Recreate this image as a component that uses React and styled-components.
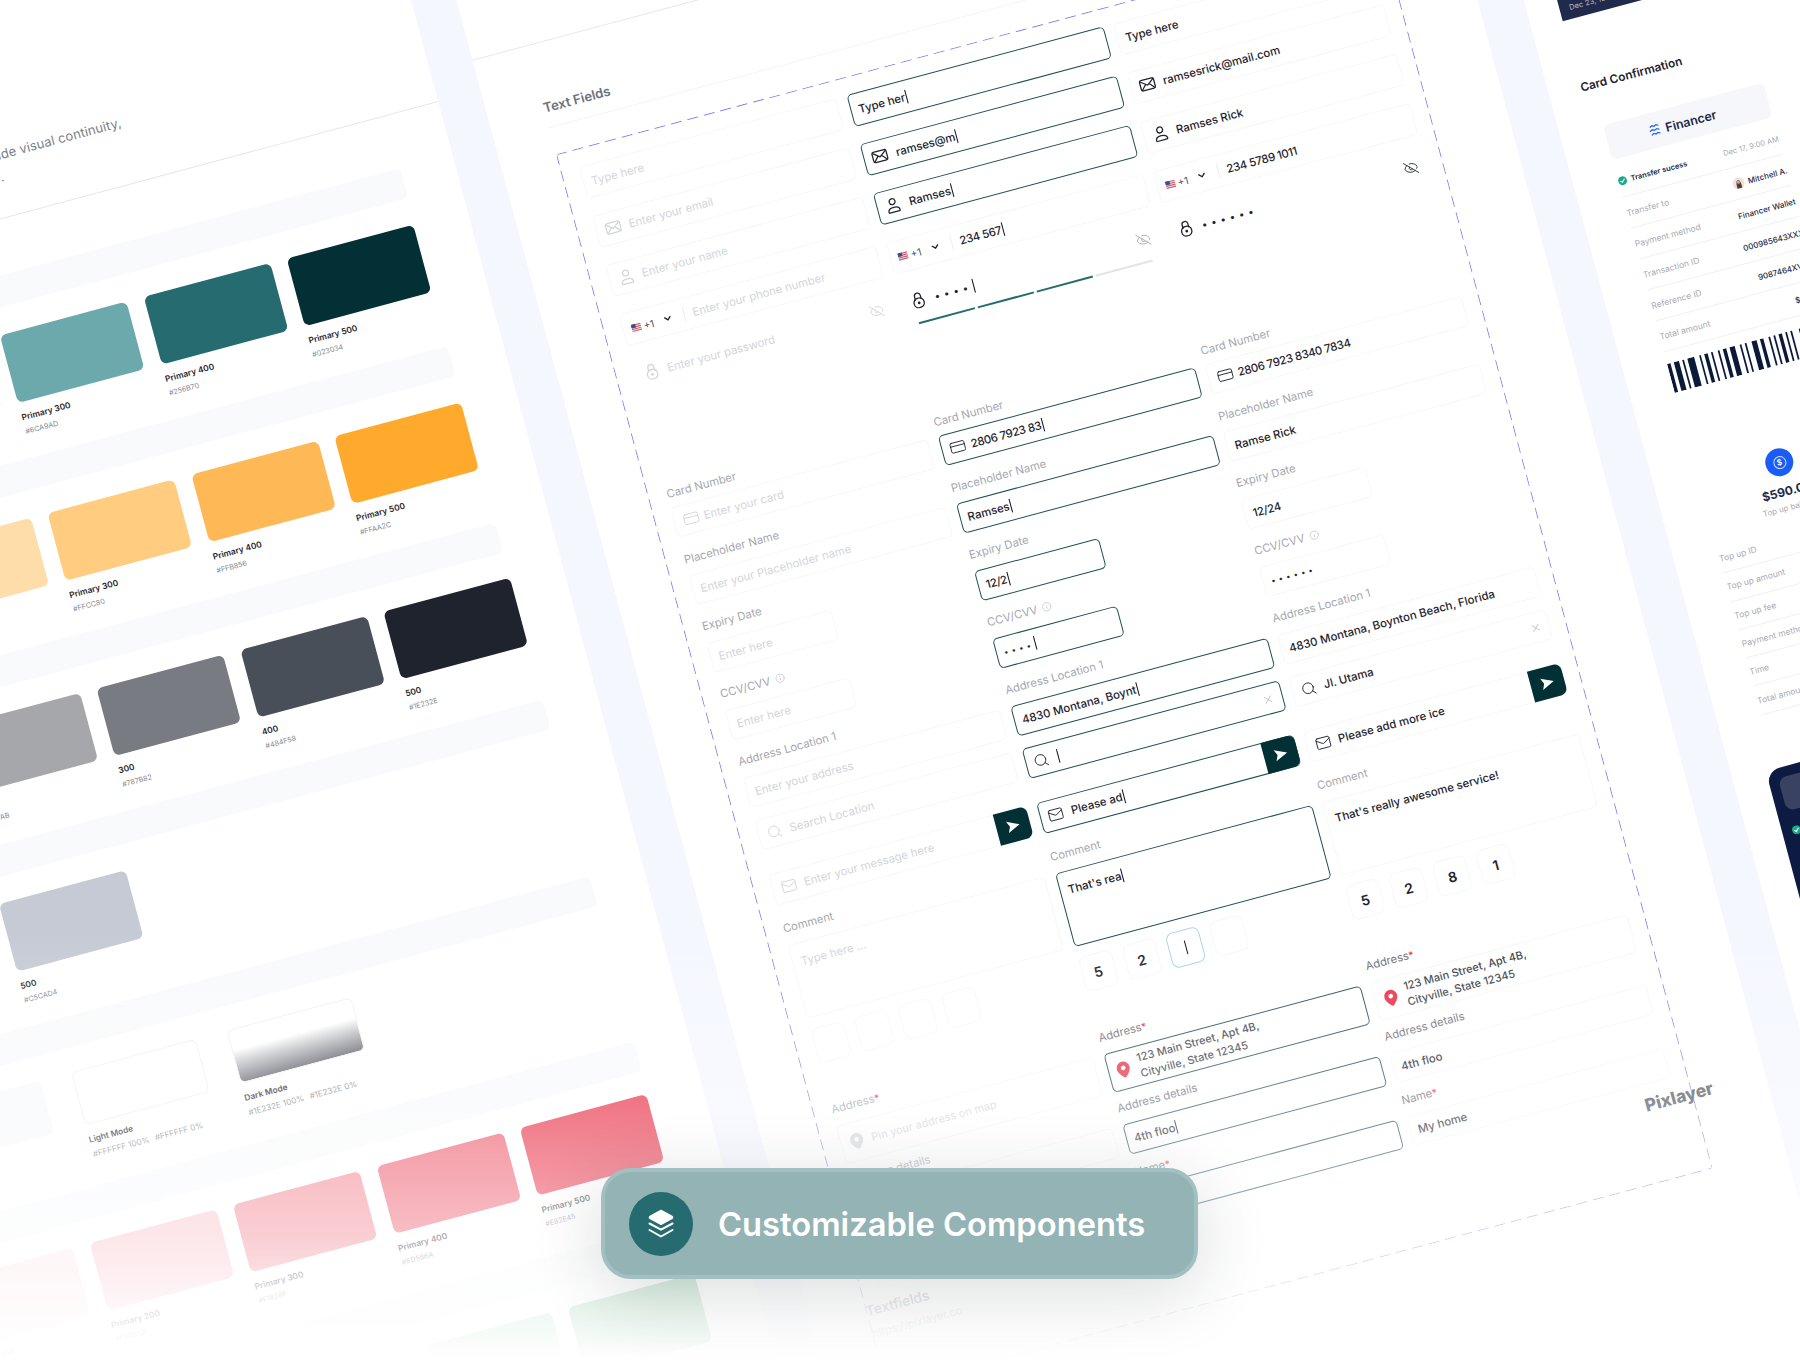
import styled, { createGlobalStyle } from "styled-components";
import { ChevronDown, CreditCard, EyeOff, Info, Mail, Search, X } from "lucide-react";

const GlobalStyle = createGlobalStyle`
  html, body {
    margin: 0;
    padding: 0;
    background: #fff;
  }
  * {
    box-sizing: border-box;
  }
`;

const Stage = styled.div`
  position: relative;
  width: 1800px;
  height: 1360px;
  overflow: hidden;
  background: #fff;
  font-family: Inter, "Liberation Sans", sans-serif;
`;

const Canvas = styled.div`
  position: absolute;
  left: 0;
  top: 0;
  width: 2240px;
  height: 1800px;
  display: flex;
  transform-origin: 0 0;
  transform: rotate(-15deg) translateX(-400px);
`;

const Gutter = styled.div`
  flex: none;
  width: ${(p) => p.$w}px;
  background: #f5f7ff;
`;

const Fade = styled.div`
  position: absolute;
  inset: 0;
  pointer-events: none;
  background: linear-gradient(
    to bottom,
    rgba(255, 255, 255, 0) 930px,
    rgba(255, 255, 255, 0.36) 1110px,
    rgba(255, 255, 255, 0.62) 1240px,
    rgba(255, 255, 255, 0.84) 1300px,
    rgba(255, 255, 255, 1) 1360px
  );
`;

/* ---------- colour board ---------- */

const ColorBoard = styled.section`
  flex: none;
  width: 797px;
  padding-top: 138px;
  background: #fff;
`;

const Intro = styled.p`
  margin: 0;
  width: 485px;
  text-align: right;
  font-size: 13px;
  line-height: 22px;
  letter-spacing: 0.1px;
  color: #7b7f89;
`;

const IntroLine = styled.span`
  display: block;
  white-space: nowrap;
  padding-right: ${(p) => p.$inset || 0}px;
`;

const BoardRule = styled.div`
  height: 1px;
  background: #e7e8eb;
  margin-top: ${(p) => p.$top}px;
`;

const Groups = styled.div`
  margin-top: 54px;
`;

const Group = styled.div`
  height: ${(p) => p.$pitch}px;
`;

const Banner = styled.div`
  height: 31px;
  margin-right: 54px;
  border-radius: 6px;
  background: #f8fafb;
`;

const SwatchRow = styled.div`
  display: flex;
  justify-content: flex-end;
  gap: ${(p) => p.$gap}px;
  padding-right: ${(p) => p.$inset}px;
  margin-top: ${(p) => p.$top}px;
`;

const SwatchCell = styled.div`
  flex: none;
  width: ${(p) => p.$w}px;
`;

const Swatch = styled.div`
  height: ${(p) => p.$h}px;
  border-radius: 6px;
  background: ${(p) => p.$fill};
  border: ${(p) => (p.$outlined ? "1px solid #f0f1f3" : "none")};
`;

const SwatchName = styled.div`
  margin-top: 9px;
  font-size: 8.4px;
  line-height: 12px;
  font-weight: 600;
  color: #1e232e;
`;

const SwatchHex = styled.div`
  display: flex;
  gap: 6px;
  margin-top: 4px;
  font-size: ${(p) => p.$size || 7.2}px;
  line-height: 10px;
  white-space: nowrap;
  color: #85888f;
`;

const colorGroups = [
  {
    pitch: 184, inset: 56, w: 131, gap: 17.5, h: 70, top: 27,
    items: [
      { fill: "#9dc6c9", name: "Primary 200", hex: "#9DC6C9" },
      { fill: "#6CA9AD", name: "Primary 300", hex: "#6CA9AD" },
      { fill: "#256B70", name: "Primary 400", hex: "#256B70" },
      { fill: "#023034", name: "Primary 500", hex: "#023034" },
    ],
  },
  {
    pitch: 183, inset: 56, w: 131, gap: 17.5, h: 70, top: 27,
    items: [
      { fill: "#FFDDAA", name: "Primary 200", hex: "#FFDDAA" },
      { fill: "#FFCC80", name: "Primary 300", hex: "#FFCC80" },
      { fill: "#FFB856", name: "Primary 400", hex: "#FFB856" },
      { fill: "#FFAA2C", name: "Primary 500", hex: "#FFAA2C" },
    ],
  },
  {
    pitch: 183, inset: 54, w: 131, gap: 17.5, h: 70, top: 26,
    items: [
      { fill: "#A5A7AB", name: "200", hex: "#A5A7AB" },
      { fill: "#787B82", name: "300", hex: "#787B82" },
      { fill: "#484F58", name: "400", hex: "#484F58" },
      { fill: "#1E232E", name: "500", hex: "#1E232E" },
    ],
  },
  {
    pitch: 183, inset: 501.5, w: 131, gap: 17.5, h: 70, top: 26,
    items: [{ fill: "#C5CAD4", name: "500", hex: "#C5CAD4" }],
  },
  {
    pitch: 171, inset: 316, w: 129, gap: 32, h: 55, top: 24, hexSize: 8.2,
    items: [
      { fill: "#f8f9fb", name: "", hex: "" },
      { fill: "#fff", outlined: true, name: "Light Mode", hex: "#FFFFFF 100%", hex2: "#FFFFFF 0%" },
      {
        fill: "linear-gradient(to bottom, #fff 38%, rgba(30, 35, 46, 0.68) 100%)",
        outlined: true, name: "Dark Mode", hex: "#1E232E 100%", hex2: "#1E232E 0%",
      },
    ],
  },
  {
    pitch: 186, inset: 56, w: 131, gap: 17.5, h: 70, top: 23,
    items: [
      { fill: "#FCE3E6", name: "Primary 100", hex: "#FCE3E6" },
      { fill: "#F9C0C8", name: "Primary 200", hex: "#F9C0C8" },
      { fill: "#F1828F", name: "Primary 300", hex: "#F1828F" },
      { fill: "#ED586A", name: "Primary 400", hex: "#ED586A" },
      { fill: "#E82E45", name: "Primary 500", hex: "#E82E45" },
    ],
  },
  {
    pitch: 184, inset: 56, w: 131, gap: 17.5, h: 70, top: 23,
    items: [
      { fill: "#8bd0a3", name: "Primary 400", hex: "#8BD0A3" },
      { fill: "#5cb87d", name: "Primary 500", hex: "#5CB87D" },
    ],
  },
];

function Colors() {
  return (
    <ColorBoard>
      <Intro>
        <IntroLine>Color tokens across all screens provide visual continuity,</IntroLine>
        <IntroLine $inset={127}>and keep each state easy to recognise.</IntroLine>
      </Intro>
      <BoardRule $top={29} />
      <Groups>
        {colorGroups.map((g, i) => (
          <Group key={i} $pitch={g.pitch}>
            <Banner />
            <SwatchRow $gap={g.gap} $inset={g.inset} $top={g.top}>
              {g.items.map((s, j) => (
                <SwatchCell key={j} $w={g.w}>
                  <Swatch $h={g.h} $fill={s.fill} $outlined={s.outlined} />
                  <SwatchName>{s.name}</SwatchName>
                  <SwatchHex $size={g.hexSize}>
                    <span>{s.hex}</span>
                    {s.hex2 && <span>{s.hex2}</span>}
                  </SwatchHex>
                </SwatchCell>
              ))}
            </SwatchRow>
          </Group>
        ))}
      </Groups>
    </ColorBoard>
  );
}

/* ---------- little drawings ---------- */

const Glyph = ({ children, size = 14 }) => (
  <svg width={size} height={size} viewBox="0 0 16 16" fill="none" stroke="currentColor" strokeWidth="1.2" strokeLinecap="round" strokeLinejoin="round" style={{ flex: "none" }}>
    {children}
  </svg>
);

const MailCross = () => (
  <Glyph size={17}>
    <rect x="1.2" y="3" width="13.6" height="10" rx="1.6" />
    <path d="M1.8 4l6.2 4.8L14.2 4M2 12.4l4.3-4.8M14 12.4L9.7 7.6" />
  </Glyph>
);

const Person = () => (
  <Glyph size={17}>
    <circle cx="8" cy="4.4" r="2.8" />
    <path d="M2.6 13.6c0-2.3 2.3-3.6 5.400-3.600s5.400 1.300 5.400 3.600c0 .5-.3.8-.8.8H3.400c-.5 0-.8-.3-.8-.8z" />
  </Glyph>
);

const Padlock = () => (
  <Glyph size={17}>
    <rect x="3.2" y="6.2" width="9.6" height="9" rx="4.2" />
    <path d="M5.200 7.400V4.200a2.800 2.800 0 0 1 5.600 0v3.200" />
    <circle cx="8" cy="10.800" r=".7" fill="currentColor" />
  </Glyph>
);

const UsFlag = () => (
  <svg width="10" height="8" viewBox="0 0 10 8" style={{ flex: "none" }}>
    <rect width="10" height="8" fill="#e7e9ee" />
    <path d="M0 1h10M0 3h10M0 5h10M0 7h10" stroke="#d8485a" strokeWidth="1" />
    <rect width="4.6" height="4" fill="#3c4f8c" />
  </svg>
);

const PinMark = ({ color }) => (
  <svg width="15" height="18" viewBox="0 0 16 19" style={{ flex: "none" }}>
    <path d="M8 .8A7 7 0 0 0 1 7.800c0 4.600 5 9 6.200 10a1.200 1.200 0 0 0 1.600 0c1.200-1 6.200-5.400 6.200-10a7 7 0 0 0-7-7z" fill={color} />
    <circle cx="8" cy="7.600" r="2.500" fill="#fff" />
  </svg>
);

const PaperArrow = () => (
  <svg width="16" height="16" viewBox="0 0 16 16">
    <path d="M2 2.200l12.500 5.800L2 13.800 4.600 8z" fill="#fff" />
  </svg>
);

const StackMark = () => (
  <svg width="30" height="34" viewBox="0 0 30 34" fill="none">
    <path d="M15 3.500l11 6a1 1 0 0 1 0 1.800l-11 6-11-6a1 1 0 0 1 0-1.800z" fill="#fff" stroke="#fff" strokeWidth="1.500" strokeLinejoin="round" />
    <path d="M3.500 16.500l11.500 6.200 11.500-6.200M3.500 23l11.500 6.500L26.500 23" stroke="#fff" strokeWidth="2" strokeLinecap="round" strokeLinejoin="round" />
  </svg>
);

const FinancerMark = () => (
  <svg width="14" height="14" viewBox="0 0 12 14" fill="none" stroke="#2f6bf0" strokeWidth="1.300" strokeLinecap="round">
    <path d="M2 3l2-1 2 1 2-1 2 1M1 7l2.500-1 2 1 2.500-1 2 1M2 11l2-1 2 1 2-1 2 1" />
  </svg>
);

const CheckBadge = () => (
  <svg width="9" height="9" viewBox="0 0 10 10" style={{ flex: "none" }}>
    <circle cx="5" cy="5" r="5" fill="#19a98d" />
    <path d="M2.800 5.200l1.600 1.500 2.900-3" stroke="#fff" strokeWidth="1.200" fill="none" strokeLinecap="round" />
  </svg>
);

const Avatar = () => (
  <svg width="12" height="12" viewBox="0 0 12 12" style={{ flex: "none" }}>
    <circle cx="6" cy="6" r="6" fill="#e7e4e2" />
    <path d="M3.500 11c0-4 .2-8 2.500-8s2.500 4 2.500 8z" fill="#5b3a2a" />
    <circle cx="6" cy="5" r="1.500" fill="#d9a888" />
  </svg>
);

const barWidths = [2, 1, 3, 1, 1, 1, 4, 2, 1, 1, 2, 1, 1, 2, 1, 1, 2, 1, 3, 2, 1, 1, 1, 2, 3, 1, 2, 2, 1, 1, 1, 1, 2, 1, 1, 1, 1, 3, 2, 4, 1, 1, 2, 1, 3];

function Barcode() {
  let x = 0;
  const bars = barWidths.map((w, i) => {
    const bar = i % 2 === 0 ? <rect key={i} x={x} y="0" width={w} height="30" fill="#0c1a3a" /> : null;
    x += i % 2 === 0 ? w : w + 1;
    return bar;
  });
  return (
    <svg width="166" height="30" viewBox={`0 0 ${x} 30`} preserveAspectRatio="none" style={{ display: "block", marginTop: 12 }}>
      {bars}
    </svg>
  );
}

/* ---------- text fields board ---------- */

const FieldBoard = styled.section`
  flex: none;
  width: 986px;
  padding-top: 180px;
  background: #fff;
`;

const FieldInner = styled.div`
  padding: 0 75px 0 56px;
`;

const BoardTitle = styled.h2`
  margin: 54px 0 0;
  font-size: 13.2px;
  line-height: 20px;
  font-weight: 600;
  color: #6d717b;
`;

const TitleRule = styled.div`
  height: 1px;
  margin: 10px 0 27px;
  background: #f4f5f7;
`;

const DashedFrame = styled.div`
  height: 1279px;
  padding: 18px 0 0 19px;
  border-radius: 4px;
  background:
    linear-gradient(to right, #8e80ee 62%, transparent 0) top left / 17px 1px repeat-x,
    linear-gradient(to right, #8e80ee 62%, transparent 0) bottom left / 17px 1px repeat-x,
    linear-gradient(to bottom, #8e80ee 62%, transparent 0) top left / 1px 17px repeat-y,
    linear-gradient(to bottom, #8e80ee 62%, transparent 0) top right / 1px 17px repeat-y;
`;

const Columns = styled.div`
  display: flex;
  gap: 10.5px;
`;

const Column = styled.div`
  flex: none;
  width: 266px;
  display: flex;
  flex-direction: column;
`;

const FieldBox = styled.div`
  display: flex;
  align-items: ${(p) => (p.$top ? "flex-start" : "center")};
  gap: ${(p) => p.$gap || 8}px;
  width: ${(p) => (p.$w ? `${p.$w}px` : "auto")};
  height: ${(p) => p.$h || 33}px;
  margin-top: ${(p) => p.$mt || 0}px;
  padding: ${(p) => (p.$top ? "11px 8px" : "0 7.5px")};
  border-radius: 5px;
  border: 1px solid ${(p) => (p.$active ? "#1f4f53" : p.$plain ? "transparent" : "#f7f7f9")};
  color: ${(p) => (p.$tone === "empty" ? "#d3d5da" : "#1e232e")};
  font-size: 11.4px;
  line-height: 14px;
  white-space: nowrap;
`;

const Value = styled.span`
  font-weight: ${(p) => (p.$tone === "empty" ? 400 : 500)};
  letter-spacing: ${(p) => (p.$num ? "-0.35px" : "normal")};
`;

const Caret = styled.i`
  display: inline-block;
  width: 1px;
  height: 14px;
  margin-left: 1px;
  vertical-align: -3px;
  background: #111;
`;

const Dots = styled.span`
  font-size: ${(p) => (p.$small ? 8 : 10)}px;
  letter-spacing: ${(p) => (p.$small ? 3.2 : 4)}px;
  color: #1e232e;
`;

const Trailing = styled.span`
  display: flex;
  margin-left: auto;
  color: ${(p) => p.$color || "inherit"};
`;

const PhoneCode = styled.span`
  display: flex;
  align-items: center;
  gap: 3px;
  font-size: 10px;
  color: #4b4f58;
  svg + span + svg {
    margin-left: 6px;
    color: #1e232e;
  }
`;

const Split = styled.i`
  width: 1px;
  height: 15px;
  margin-left: 3px;
  background: #eceded;
`;

const SendButton = styled.span`
  display: flex;
  align-items: center;
  justify-content: center;
  flex: none;
  width: 34px;
  height: 32px;
  margin: 0 -8.5px 0 auto;
  background: #023034;
  border-radius: 0 7px 7px 0;
`;

const Strength = styled.div`
  display: flex;
  gap: 3px;
  height: 2px;
  margin: 5px 13px 0 11px;
`;

const StrengthBar = styled.i`
  flex: 1;
  background: ${(p) => (p.$on ? "#256B70" : "#e3e4e6")};
`;

const Label = styled.div`
  height: 16px;
  margin: ${(p) => p.$mt || 0}px 0 ${(p) => p.$mb || 9}px;
  display: flex;
  align-items: center;
  gap: 5px;
  font-size: 11.3px;
  line-height: 16px;
  color: ${(p) => (p.$dark ? "#6a6d75" : "#a4a7ae")};
`;

const Required = styled.b`
  font-weight: 500;
  color: #e82e45;
  margin-left: -5px;
  align-self: flex-start;
  font-size: 10px;
`;

const OtpRow = styled.div`
  display: flex;
  gap: 11px;
  margin-top: 11px;
`;

const OtpBox = styled.div`
  display: flex;
  align-items: center;
  justify-content: center;
  width: 34px;
  height: 36px;
  border-radius: 7px;
  border: 1px solid ${(p) => (p.$focus ? "#a8d4ec" : "#f7f7f9")};
  font-size: 14px;
  font-weight: 600;
  color: #1e232e;
`;

const AddressText = styled.div`
  font-size: 11px;
  line-height: 16px;
  font-weight: ${(p) => (p.$tone === "empty" ? 400 : 500)};
  color: ${(p) => (p.$tone === "empty" ? "#d3d5da" : "#3a3f4a")};
`;

const Footer = styled.div`
  display: flex;
  justify-content: space-between;
  margin: 8px -21px 0 -19px;
`;

const FooterName = styled.div`
  font-size: 14px;
  line-height: 20px;
  font-weight: 500;
  color: #6d717b;
`;

const FooterLink = styled.div`
  margin-top: 6px;
  font-size: 11px;
  color: #9a9da5;
`;

const Brand = styled.div`
  font-size: 17.5px;
  line-height: 26px;
  font-weight: 800;
  color: #50545e;
`;

const FieldColumn = ({ d, tone }) => {
  const active = tone === "focus";
  const dark = tone !== "empty";
  const text = (v, num) => (
    <Value $tone={tone} $num={num}>
      {v}
      {active && <Caret />}
    </Value>
  );
  const label = (t, mt, extra, strong, mb) => (
    <Label $mt={mt} $mb={mb} $dark={strong && dark}>
      {t}
      {extra}
    </Label>
  );
  const req = <Required>*</Required>;

  return (
    <Column>
      <FieldBox $active={active} $tone={tone}>{text(d.basic)}</FieldBox>
      <FieldBox $mt={18} $active={active} $tone={tone}><MailCross />{text(d.email)}</FieldBox>
      <FieldBox $mt={18} $active={active} $tone={tone}><Person />{text(d.name)}</FieldBox>
      <FieldBox $mt={18} $tone={tone}>
        <PhoneCode>
          <UsFlag />
          <span>+1</span>
          <ChevronDown size={11} strokeWidth={3} />
        </PhoneCode>
        <Split />
        {text(d.phone, dark)}
      </FieldBox>
      <FieldBox $mt={14} $plain $tone={tone}>
        <Padlock />
        {tone === "empty" ? text(d.password) : <Dots>{d.password}{active && <Caret />}</Dots>}
        <Trailing $color={tone === "filled" ? "#1e232e" : tone === "focus" ? "#a4a7ae" : "#d3d5da"}>
          <EyeOff size={15} strokeWidth={1.3} />
        </Trailing>
      </FieldBox>
      <Strength>
        {active && [true, true, true, false].map((on, i) => <StrengthBar key={i} $on={on} />)}
      </Strength>

      {label("Card Number", 91, null, false, 6)}
      <FieldBox $h={31} $gap={5} $active={active} $tone={tone}><CreditCard size={17} strokeWidth={1.2} />{text(d.card, dark)}</FieldBox>
      {label("Placeholder Name", 15, null, false, 8)}
      <FieldBox $h={31} $active={active} $tone={tone}>{text(d.holder)}</FieldBox>
      {label("Expiry Date", 14)}
      <FieldBox $h={31} $w={129} $active={active} $tone={tone}>{text(d.expiry, dark)}</FieldBox>
      {label("CCV/CVV", 14, <Info size={10} color="#c9cbd0" />)}
      <FieldBox $h={31} $w={129} $active={active} $tone={tone}>
        {tone === "empty" ? text(d.ccv) : <Dots $small>{d.ccv}{active && <Caret />}</Dots>}
      </FieldBox>
      {label("Address Location 1", 14)}
      <FieldBox $h={31} $active={active} $tone={tone}>{text(d.address)}</FieldBox>
      <FieldBox $h={31} $mt={13} $active={active} $tone={tone}>
        <Search size={16} strokeWidth={1.3} />
        {text(d.search)}
        {tone !== "empty" && <Trailing $color="#bcbec4"><X size={12} strokeWidth={1.6} /></Trailing>}
      </FieldBox>
      <FieldBox $h={32} $mt={25} $active={active} $tone={tone}>
        <Mail size={16} strokeWidth={1.3} />
        {text(d.message)}
        <SendButton><PaperArrow /></SendButton>
      </FieldBox>
      {label("Comment", 16)}
      <FieldBox $h={76} $top $active={active} $tone={tone}>{text(d.comment)}</FieldBox>
      <OtpRow>
        {d.otp.map((n, i) => (
          <OtpBox key={i} $focus={n === "|"}>
            {n === "|" ? <Caret /> : n}
          </OtpBox>
        ))}
      </OtpRow>
      {label(<>Address</>, 39, req, true)}
      <FieldBox $h={40} $active={active} $tone={tone}>
        <PinMark color={tone === "empty" ? "#d5d6da" : "#e82e45"} />
        <AddressText $tone={tone}>
          {d.pin.map((line) => <div key={line}>{line}</div>)}
        </AddressText>
      </FieldBox>
      {label("Address details", 8, null, true)}
      <FieldBox $h={31} $active={active} $tone={tone}>{text(d.details)}</FieldBox>
      {label(<>Name</>, 10, req, true)}
      <FieldBox $h={30} $active={active} $tone={tone}>{text(d.nick)}</FieldBox>
    </Column>
  );
};

const emptyData = {
  basic: "Type here", email: "Enter your email", name: "Enter your name",
  phone: "Enter your phone number", password: "Enter your password",
  card: "Enter your card", holder: "Enter your Placeholder name", expiry: "Enter here", ccv: "Enter here",
  address: "Enter your address", search: "Search Location", message: "Enter your message here",
  comment: "Type here ...", otp: ["", "", "", ""], pin: ["Pin your address on map"],
  details: "Enter details", nick: "Enter name",
};

const focusData = {
  basic: "Type her", email: "ramses@m", name: "Ramses", phone: "234 567", password: "••••",
  card: "2806 7923 83", holder: "Ramses", expiry: "12/2", ccv: "••••",
  address: "4830 Montana, Boynt", search: "", message: "Please ad", comment: "That's rea",
  otp: ["5", "2", "|", ""], pin: ["123 Main Street, Apt 4B,", "Cityville, State 12345"],
  details: "4th floo", nick: "",
};

const filledData = {
  basic: "Type here", email: "ramsesrick@mail.com", name: "Ramses Rick", phone: "234 5789 1011", password: "••••••",
  card: "2806 7923 8340 7834", holder: "Ramse Rick", expiry: "12/24", ccv: "••••••",
  address: "4830 Montana, Boynton Beach, Florida", search: "Jl. Utama", message: "Please add more ice",
  comment: "That's really awesome service!", otp: ["5", "2", "8", "1"],
  pin: ["123 Main Street, Apt 4B,", "Cityville, State 12345"], details: "4th floo", nick: "My home",
};

function TextFields() {
  return (
    <FieldBoard>
      <BoardRule $top={0} />
      <FieldInner>
        <BoardTitle>Text Fields</BoardTitle>
        <TitleRule />
        <DashedFrame>
          <Columns>
            <FieldColumn d={emptyData} tone="empty" />
            <FieldColumn d={focusData} tone="focus" />
            <FieldColumn d={filledData} tone="filled" />
          </Columns>
          <Footer>
            <div>
              <FooterName>Textfields</FooterName>
              <FooterLink>https://pixlayer.co</FooterLink>
            </div>
            <Brand>Pixlayer</Brand>
          </Footer>
        </DashedFrame>
      </FieldInner>
    </FieldBoard>
  );
}

/* ---------- receipts board ---------- */

const ReceiptBoard = styled.section`
  flex: 1;
  padding: 0 0 0 32px;
  background: #fff;
`;

const TopCard = styled.div`
  display: flex;
  align-items: flex-end;
  width: 176px;
  height: 425px;
  padding: 0 10px 7px;
  background: #1f2a4d;
  font-size: 7.5px;
  color: #b8bdcb;
`;

const ReceiptTitle = styled.h2`
  margin: 59px 0 0;
  font-size: 11.8px;
  line-height: 20px;
  font-weight: 600;
  color: #1e232e;
`;

const Receipt = styled.div`
  width: 166px;
  margin-left: 12px;
`;

const LogoBanner = styled.div`
  display: flex;
  align-items: center;
  justify-content: center;
  gap: 4px;
  height: 36px;
  margin-top: 32px;
  padding-right: 12px;
  border-radius: 6px;
  background: #f6f7fb;
  font-size: 12.4px;
  font-weight: 600;
  color: #1b2a4a;
`;

const InfoRow = styled.div`
  display: flex;
  align-items: center;
  justify-content: space-between;
  height: ${(p) => p.$h}px;
  border-bottom: 1px solid #f0f1f4;
  font-size: 8px;
  font-weight: 500;
  color: #1e2a48;
  margin-top: ${(p) => p.$mt || 0}px;
  white-space: nowrap;
`;

const RowKey = styled.span`
  display: flex;
  align-items: center;
  gap: 4px;
  font-weight: ${(p) => (p.$strong ? 600 : 400)};
  color: ${(p) => (p.$strong ? "#1e2a48" : "#a7aab3")};
  font-size: ${(p) => (p.$strong ? 7.5 : 8.5)}px;
`;

const RowValue = styled.span`
  display: flex;
  align-items: center;
  gap: 4px;
`;

const MutedDate = styled.span`
  font-weight: 400;
  font-size: 7.5px;
  color: #a7aab3;
`;

const Coin = styled.div`
  display: flex;
  align-items: center;
  justify-content: center;
  width: 28px;
  height: 28px;
  margin: 80px auto 0;
  border-radius: 50%;
  background: #1a5cf5;
  color: #fff;
  font-size: 8px;
  font-weight: 600;
`;

const CoinRing = styled.span`
  display: flex;
  align-items: center;
  justify-content: center;
  width: 13px;
  height: 13px;
  border-radius: 50%;
  border: 1px solid #cfe0ff;
`;

const Amount = styled.div`
  margin-top: 6px;
  text-align: center;
  font-size: 12px;
  line-height: 20px;
  font-weight: 700;
  color: #1e2a48;
`;

const AmountNote = styled.div`
  margin-bottom: 11px;
  text-align: center;
  font-size: 8px;
  line-height: 13px;
  color: #a7aab3;
`;

const DarkCard = styled.div`
  width: 176px;
  height: 240px;
  margin: 55px 0 0 -10px;
  padding: 10px;
  border-radius: 14px;
  background: #0d1a42;
`;

const DarkBanner = styled.div`
  height: 34px;
  border-radius: 8px;
  background: #3a4263;
`;

const DarkStatus = styled.div`
  margin-top: 16px;
  display: flex;
  align-items: center;
  gap: 4px;
  font-size: 8px;
  color: #fff;
`;

const receiptRows = [
  ["Transfer to", <><Avatar />Mitchell A.</>],
  ["Payment method", "Financer Wallet"],
  ["Transaction ID", "000985643XXX"],
  ["Reference ID", "9087464XV75"],
  ["Total amount", "$15.00"],
];

const topupRows = [
  ["Top up ID", "4590"], ["Top up amount", "$590.00"], ["Top up fee", "$0.00"],
  ["Payment method", "Card"], ["Time", "9:00 AM"], ["Total amount", "$590.00"],
];

function Receipts() {
  return (
    <ReceiptBoard>
      <TopCard>Dec 23, 10:00 AM</TopCard>
      <ReceiptTitle>Card Confirmation</ReceiptTitle>
      <Receipt>
        <LogoBanner><FinancerMark />Financer</LogoBanner>
        <InfoRow $h={32} $mt={7}>
          <RowKey $strong><CheckBadge />Transfer sucess</RowKey>
          <MutedDate>Dec 17, 9:00 AM</MutedDate>
        </InfoRow>
        {receiptRows.map(([k, v]) => (
          <InfoRow key={k} $h={32}>
            <RowKey>{k}</RowKey>
            <RowValue>{v}</RowValue>
          </InfoRow>
        ))}
        <Barcode />
        <Coin><CoinRing>$</CoinRing></Coin>
        <Amount>$590.00</Amount>
        <AmountNote>Top up balance</AmountNote>
        {topupRows.map(([k, v]) => (
          <InfoRow key={k} $h={29.3}>
            <RowKey>{k}</RowKey>
            <RowValue>{v}</RowValue>
          </InfoRow>
        ))}
        <DarkCard>
          <DarkBanner />
          <DarkStatus><CheckBadge />Transfer sucess</DarkStatus>
        </DarkCard>
      </Receipt>
    </ReceiptBoard>
  );
}

/* ---------- caption badge ---------- */

const Badge = styled.div`
  position: absolute;
  left: 601px;
  top: 1168px;
  width: 597px;
  height: 111px;
  display: flex;
  align-items: center;
  gap: 25px;
  padding-left: 24px;
  border: 4px solid #a2bfc1;
  border-radius: 30px;
  background: #93b3b5;
  box-shadow: 0 14px 70px rgba(30, 35, 46, 0.16);
`;

const BadgeIcon = styled.div`
  display: flex;
  align-items: center;
  justify-content: center;
  flex: none;
  width: 64px;
  height: 64px;
  border-radius: 50%;
  background: #256b70;
`;

const BadgeText = styled.div`
  font-size: 32.7px;
  line-height: 40px;
  font-weight: 600;
  color: #fff;
  white-space: nowrap;
`;

export default function App() {
  return (
    <Stage>
      <GlobalStyle />
      <Canvas>
        <Colors />
        <Gutter $w={44} />
        <TextFields />
        <Gutter $w={45} />
        <Receipts />
      </Canvas>
      <Fade />
      <Badge>
        <BadgeIcon><StackMark /></BadgeIcon>
        <BadgeText>Customizable Components</BadgeText>
      </Badge>
    </Stage>
  );
}
